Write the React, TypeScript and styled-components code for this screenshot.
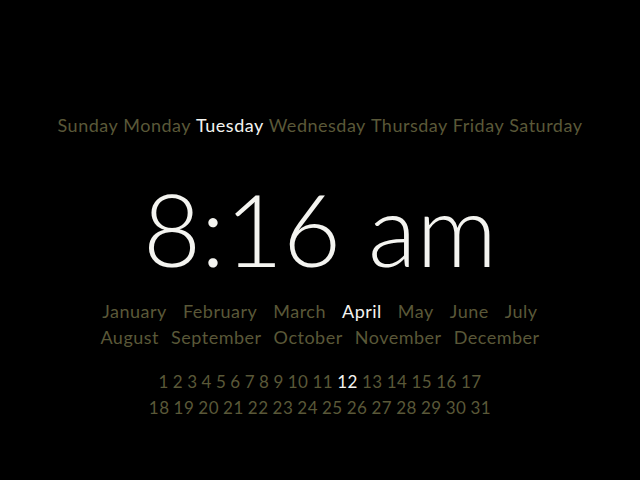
import React from 'react';
import styled, { createGlobalStyle } from 'styled-components';

const GlobalStyle = createGlobalStyle`
  html, body {
    margin: 0;
    padding: 0;
    background: #000;
  }
  body {
    font-family: Lato, "Noto Sans", sans-serif;
  }
`;

const DIM = '#5a5838';
const LIT = '#f4f4f0';

const DAYS = ['Sunday', 'Monday', 'Tuesday', 'Wednesday', 'Thursday', 'Friday', 'Saturday'];
const MONTH_ROWS = [
  ['January', 'February', 'March', 'April', 'May', 'June', 'July'],
  ['August', 'September', 'October', 'November', 'December']
];
const DATE_ROWS = [
  Array.from({ length: 17 }, (_, i) => i + 1),
  Array.from({ length: 14 }, (_, i) => i + 18)
];

const Screen = styled.div`
  width: 640px;
  height: 480px;
  background: #000;
  display: flex;
  flex-direction: column;
  align-items: center;
  padding-top: 112px;
  box-sizing: border-box;
`;

const Row = styled.div<{ $gap: number }>`
  display: flex;
  justify-content: center;
  gap: ${p => p.$gap}px;
`;

const Word = styled.span<{ $active?: boolean; $size: number }>`
  font-size: ${p => p.$size}px;
  line-height: 26px;
  letter-spacing: 0.5px;
  color: ${p => (p.$active ? LIT : DIM)};
  white-space: nowrap;
`;

const Time = styled.div`
  margin-top: 40px;
  font-size: 100px;
  font-weight: 300;
  line-height: 1;
  color: ${LIT};
`;

const MonthBlock = styled.div`
  margin-top: 20px;
  display: flex;
  flex-direction: column;
  align-items: center;
`;

const DateBlock = styled.div`
  margin-top: 19px;
  display: flex;
  flex-direction: column;
  align-items: center;
`;

export default function App() {
  return (
    <>
      <GlobalStyle />
      <Screen>
        <Row $gap={5}>
          {DAYS.map(d => (
            <Word key={d} $size={18} $active={d === 'Tuesday'}>{d}</Word>
          ))}
        </Row>
        <Time>8:16 am</Time>
        <MonthBlock>
          {MONTH_ROWS.map((row, i) => (
            <Row key={i} $gap={i === 0 ? 16 : 12}>
              {row.map(m => (
                <Word key={m} $size={18} $active={m === 'April'}>{m}</Word>
              ))}
            </Row>
          ))}
        </MonthBlock>
        <DateBlock>
          {DATE_ROWS.map((row, i) => (
            <Row key={i} $gap={4}>
              {row.map(n => (
                <Word key={n} $size={17} $active={n === 12}>{n}</Word>
              ))}
            </Row>
          ))}
        </DateBlock>
      </Screen>
    </>
  );
}
